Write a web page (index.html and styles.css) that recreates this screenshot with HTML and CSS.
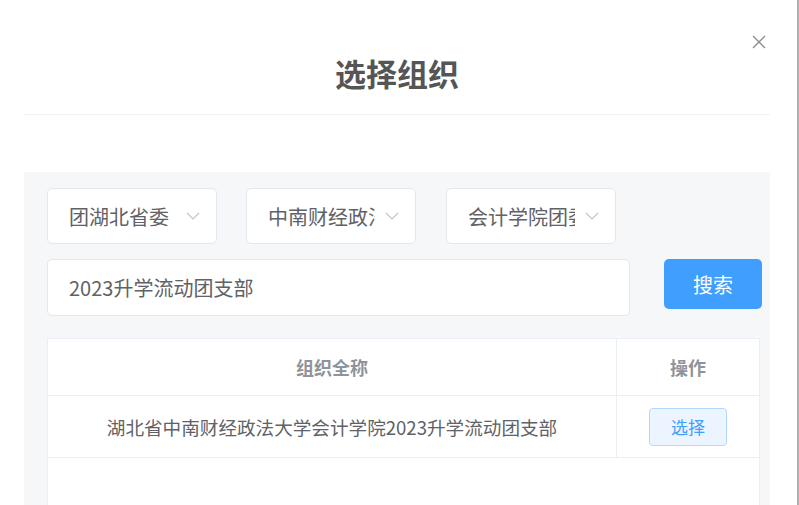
FILE: index.html
```html
<!DOCTYPE html>
<html lang="zh-CN">
<head>
<meta charset="utf-8">
<title>选择组织</title>
<link rel="stylesheet" href="styles.css">
</head>
<body>
<div class="page">
  <div class="dialog">
    <div class="dialog-header">
      <h1 class="dialog-title">选择组织</h1>
      <button class="close-btn" aria-label="关闭">
        <svg width="14" height="14" viewBox="0 0 14 14"><path d="M1 1 L13 13 M13 1 L1 13" stroke="#8c8c8c" stroke-width="1.3" fill="none"/></svg>
      </button>
    </div>
    <div class="dialog-body">
      <div class="panel">
        <div class="select-row">
          <div class="select"><span class="select-text">团湖北省委</span><svg class="chev" width="14" height="8" viewBox="0 0 14 8"><path d="M1 1 L7 7 L13 1" stroke="#c0c4cc" stroke-width="1.2" fill="none"/></svg></div>
          <div class="select"><span class="select-text">中南财经政法大学团委</span><svg class="chev" width="14" height="8" viewBox="0 0 14 8"><path d="M1 1 L7 7 L13 1" stroke="#c0c4cc" stroke-width="1.2" fill="none"/></svg></div>
          <div class="select"><span class="select-text">会计学院团委</span><svg class="chev" width="14" height="8" viewBox="0 0 14 8"><path d="M1 1 L7 7 L13 1" stroke="#c0c4cc" stroke-width="1.2" fill="none"/></svg></div>
        </div>
        <div class="search-row">
          <div class="input">2023升学流动团支部</div>
          <button class="search-btn">搜索</button>
        </div>
        <div class="table">
          <div class="tr th">
            <div class="td col-name">组织全称</div>
            <div class="td col-op">操作</div>
          </div>
          <div class="tr">
            <div class="td col-name">湖北省中南财经政法大学会计学院2023升学流动团支部</div>
            <div class="td col-op"><button class="pick-btn">选择</button></div>
          </div>
          <div class="empty"></div>
        </div>
      </div>
    </div>
  </div>
</div>
</body>
</html>
```

FILE: styles.css
```css
* { box-sizing: border-box; }
html, body { margin: 0; padding: 0; height: 100%; }
body {
  background: #ffffff;
  font-family: "Noto Sans CJK SC", "Noto Sans", sans-serif;
  color: #606266;
  overflow: hidden;
}
.page {
  width: 799px;
  height: 505px;
  border-right: 2px solid #b0b0b0;
  padding-left: 24px;
}
.dialog {
  width: 746px;
  height: 505px;
  display: flex;
  flex-direction: column;
}
.dialog-header {
  position: relative;
  height: 115px;
  border-bottom: 1px solid #f2f2f2;
  display: flex;
  justify-content: center;
  align-items: flex-start;
}
.dialog-title {
  margin: 52px 0 0 0;
  font-size: 31px;
  line-height: 42px;
  font-weight: 700;
  color: #555555;
}
.close-btn {
  position: absolute;
  top: 35px;
  right: 4px;
  width: 14px;
  height: 14px;
  padding: 0;
  border: 0;
  background: transparent;
  display: flex;
}
.dialog-body {
  padding-top: 57px;
  flex: 1;
  display: flex;
  flex-direction: column;
}
.panel {
  flex: 1;
  background: #f6f7f9;
  padding: 16px 8px 0 23px;
  display: flex;
  flex-direction: column;
}
.select-row {
  display: flex;
  gap: 29px;
}
.select-row .select:nth-child(3) { margin-left: 1px; }
.select {
  width: 170px;
  height: 56px;
  background: #ffffff;
  border: 1px solid #e4e7ed;
  border-radius: 5px;
  display: flex;
  align-items: center;
  padding-left: 21px;
  padding-right: 16px;
}
.select-text {
  width: 107px;
  overflow: hidden;
  white-space: nowrap;
  font-size: 20px;
  color: #606266;
}
.chev { margin-left: auto; flex: none; }
.search-row {
  display: flex;
  gap: 34px;
  margin-top: 15px;
  align-items: flex-start;
}
.input {
  width: 583px;
  height: 57px;
  background: #ffffff;
  border: 1px solid #e4e7ed;
  border-radius: 5px;
  display: flex;
  align-items: center;
  padding-left: 21px;
  font-size: 20px;
  color: #606266;
}
.search-btn {
  width: 98px;
  height: 50px;
  border: 0;
  border-radius: 5px;
  background: #409eff;
  color: #ffffff;
  font-family: inherit;
  font-size: 20px;
  padding: 0;
}
.table {
  margin-top: 22px;
  width: 713px;
  flex: 1;
  background: #ffffff;
  border: 1px solid #ebeef5;
  border-bottom: 0;
  display: flex;
  flex-direction: column;
}
.tr {
  display: flex;
  border-bottom: 1px solid #ebeef5;
  height: 62px;
}
.tr.th {
  height: 57px;
  font-weight: 700;
  color: #909399;
  font-size: 18px;
}
.td {
  display: flex;
  align-items: center;
  justify-content: center;
}
.col-name {
  width: 569px;
  border-right: 1px solid #ebeef5;
  font-size: 18.6px;
}
.th .col-name { font-size: 18px; }
.col-op { flex: 1; }
.pick-btn {
  width: 78px;
  height: 38px;
  background: #ecf5ff;
  border: 1px solid #b3d8ff;
  border-radius: 4px;
  color: #409eff;
  font-family: inherit;
  font-size: 17px;
  padding: 0;
}
.empty { flex: 1; }
```
